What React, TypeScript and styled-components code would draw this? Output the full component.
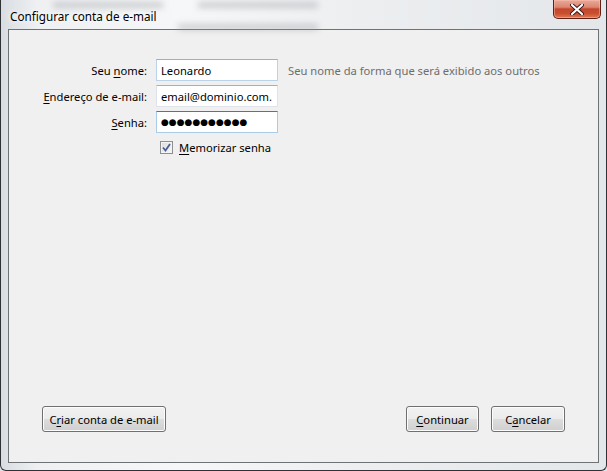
import React from 'react'
import styled, { createGlobalStyle } from 'styled-components'

const GlobalStyle = createGlobalStyle`
  html, body {
    margin: 0;
    padding: 0;
    background: #dfe3e8;
  }
  body {
    font-family: 'Noto Sans', 'Open Sans', sans-serif;
    font-size: 11.2px;
    color: #000;
  }
`

const Window = styled.div`
  position: relative;
  width: 607px;
  height: 471px;
  box-sizing: border-box;
  display: flex;
  flex-direction: column;
  padding: 0 7px 7px 7px;
  border: 1px solid #2e3236;
  border-top: none;
  border-radius: 0 0 6px 6px;
  background: linear-gradient(
    90deg,
    #d9dde2 0%,
    #eef0f2 6%,
    #f6f7f8 30%,
    #eceef0 60%,
    #e4e7ea 100%
  );
  overflow: hidden;
`

const TitleBar = styled.div`
  position: relative;
  height: 29px;
  display: flex;
  align-items: flex-start;
  justify-content: space-between;
`

const Blur = styled.span<{ $x: number; $y: number; $w: number }>`
  position: absolute;
  left: ${p => p.$x}px;
  top: ${p => p.$y}px;
  width: ${p => p.$w}px;
  height: 6px;
  background: #8e9297;
  filter: blur(3px);
  opacity: 0.4;
  pointer-events: none;
`

const Title = styled.div`
  position: relative;
  margin: 8px 0 0 2px;
  font-size: 11.7px;
  color: #000;
  text-shadow: 0 0 8px #fff, 0 0 4px #fff;
`

const CloseButton = styled.div`
  position: relative;
  width: 48px;
  height: 19px;
  margin-right: -2px;
  box-sizing: border-box;
  border: 1px solid #5f2118;
  border-top: none;
  border-radius: 0 0 5px 5px;
  background: linear-gradient(
    180deg,
    #e9a99b 0%,
    #dc8670 40%,
    #c4462b 50%,
    #c9502f 75%,
    #e07a56 100%
  );
  box-shadow: inset 0 0 0 1px rgba(255, 200, 180, 0.45);
  display: flex;
  align-items: center;
  justify-content: center;
`

const Client = styled.div`
  flex: 1;
  display: flex;
  flex-direction: column;
  justify-content: space-between;
  border: 1px solid #6f7275;
  background: #f0f0f0;
  padding: 29px 33px 30px 0;
`

const Form = styled.div`
  display: grid;
  grid-template-columns: 138px 122px auto;
  column-gap: 9px;
  row-gap: 4px;
  align-items: center;
`

const Label = styled.label`
  text-align: right;
  white-space: nowrap;
`

const Key = styled.span`
  text-decoration: underline;
  text-underline-offset: 2px;
`

const Field = styled.div<{ $state: 'hover' | 'normal' | 'focus' }>`
  height: 22px;
  box-sizing: border-box;
  padding: 0 4px;
  display: flex;
  align-items: center;
  background: #fff;
  white-space: nowrap;
  overflow: hidden;
  border: 1px solid
    ${p =>
      p.$state === 'focus'
        ? '#a9cde8'
        : p.$state === 'hover'
        ? '#b9d3ea'
        : '#dfe3e9'};
  border-top-color: ${p =>
    p.$state === 'focus' ? '#3d7bad' : p.$state === 'hover' ? '#8fb3d6' : '#abadb3'};
`

const Dots = styled.span`
  font-size: 9px;
  letter-spacing: 0;
  font-family: 'DejaVu Sans', sans-serif;
`

const Hint = styled.span`
  color: #6d6d6d;
  margin-left: 1px;
  white-space: nowrap;
`

const CheckRow = styled.div`
  grid-column: 2 / span 2;
  display: flex;
  align-items: center;
  gap: 6px;
  margin-top: 3px;
  padding-left: 4px;
`

const Box = styled.span`
  width: 13px;
  height: 13px;
  box-sizing: border-box;
  border: 1px solid #8f8f8f;
  background: linear-gradient(135deg, #dcdcdc, #f8f8f8);
  box-shadow: inset 0 0 0 1px #f4f4f4;
  display: flex;
  align-items: center;
  justify-content: center;
`

const Buttons = styled.div`
  display: flex;
  align-items: center;
  padding-left: 33px;
`

const Spacer = styled.div`
  flex: 1;
`

const Button = styled.button<{ $w: number; $gap?: number }>`
  width: ${p => p.$w}px;
  height: 26px;
  margin-left: ${p => p.$gap || 0}px;
  font-family: inherit;
  font-size: 11.2px;
  color: #000;
  border: 1px solid #707070;
  border-radius: 3px;
  background: linear-gradient(
    180deg,
    #f2f2f2 0%,
    #ebebeb 48%,
    #dddddd 50%,
    #cfcfcf 100%
  );
  box-shadow: inset 0 0 0 1px #fcfcfc;
  padding: 0;
`

const CloseGlyph = () => (
  <svg width="14" height="11" viewBox="0 0 14 11">
    <path
      d="M2 1 L12 10 M12 1 L2 10"
      stroke="#3a1410"
      strokeWidth="4"
      strokeLinecap="round"
    />
    <path
      d="M2 1 L12 10 M12 1 L2 10"
      stroke="#ffffff"
      strokeWidth="2.2"
      strokeLinecap="round"
    />
  </svg>
)

const Check = () => (
  <svg width="9" height="9" viewBox="0 0 9 9">
    <path
      d="M1 4.5 L3.5 7.5 L8 1"
      fill="none"
      stroke="#4a5f97"
      strokeWidth="1.8"
    />
  </svg>
)

const App = () => {
  return (
    <>
      <GlobalStyle />
      <Window>
        <TitleBar>
          <Blur $x={45} $y={2} $w={110} />
          <Blur $x={190} $y={2} $w={120} />
          <Blur $x={170} $y={24} $w={140} />
          <Title>Configurar conta de e-mail</Title>
          <CloseButton>
            <CloseGlyph />
          </CloseButton>
        </TitleBar>
        <Client>
          <Form>
            <Label>
              Seu <Key>n</Key>ome:
            </Label>
            <Field $state="hover">Leonardo</Field>
            <Hint>Seu nome da forma que será exibido aos outros</Hint>

            <Label>
              <Key>E</Key>ndereço de e-mail:
            </Label>
            <Field $state="normal">email@dominio.com.</Field>
            <span />

            <Label>
              <Key>S</Key>enha:
            </Label>
            <Field $state="focus">
              <Dots>●●●●●●●●●●●</Dots>
            </Field>
            <span />

            <span />
            <CheckRow>
              <Box>
                <Check />
              </Box>
              <span>
                <Key>M</Key>emorizar senha
              </span>
            </CheckRow>
          </Form>
          <Buttons>
            <Button $w={124}>
              C<Key>r</Key>iar conta de e-mail
            </Button>
            <Spacer />
            <Button $w={73}>
              <Key>C</Key>ontinuar
            </Button>
            <Button $w={74} $gap={12}>
              C<Key>a</Key>ncelar
            </Button>
          </Buttons>
        </Client>
      </Window>
    </>
  )
}

export default App
